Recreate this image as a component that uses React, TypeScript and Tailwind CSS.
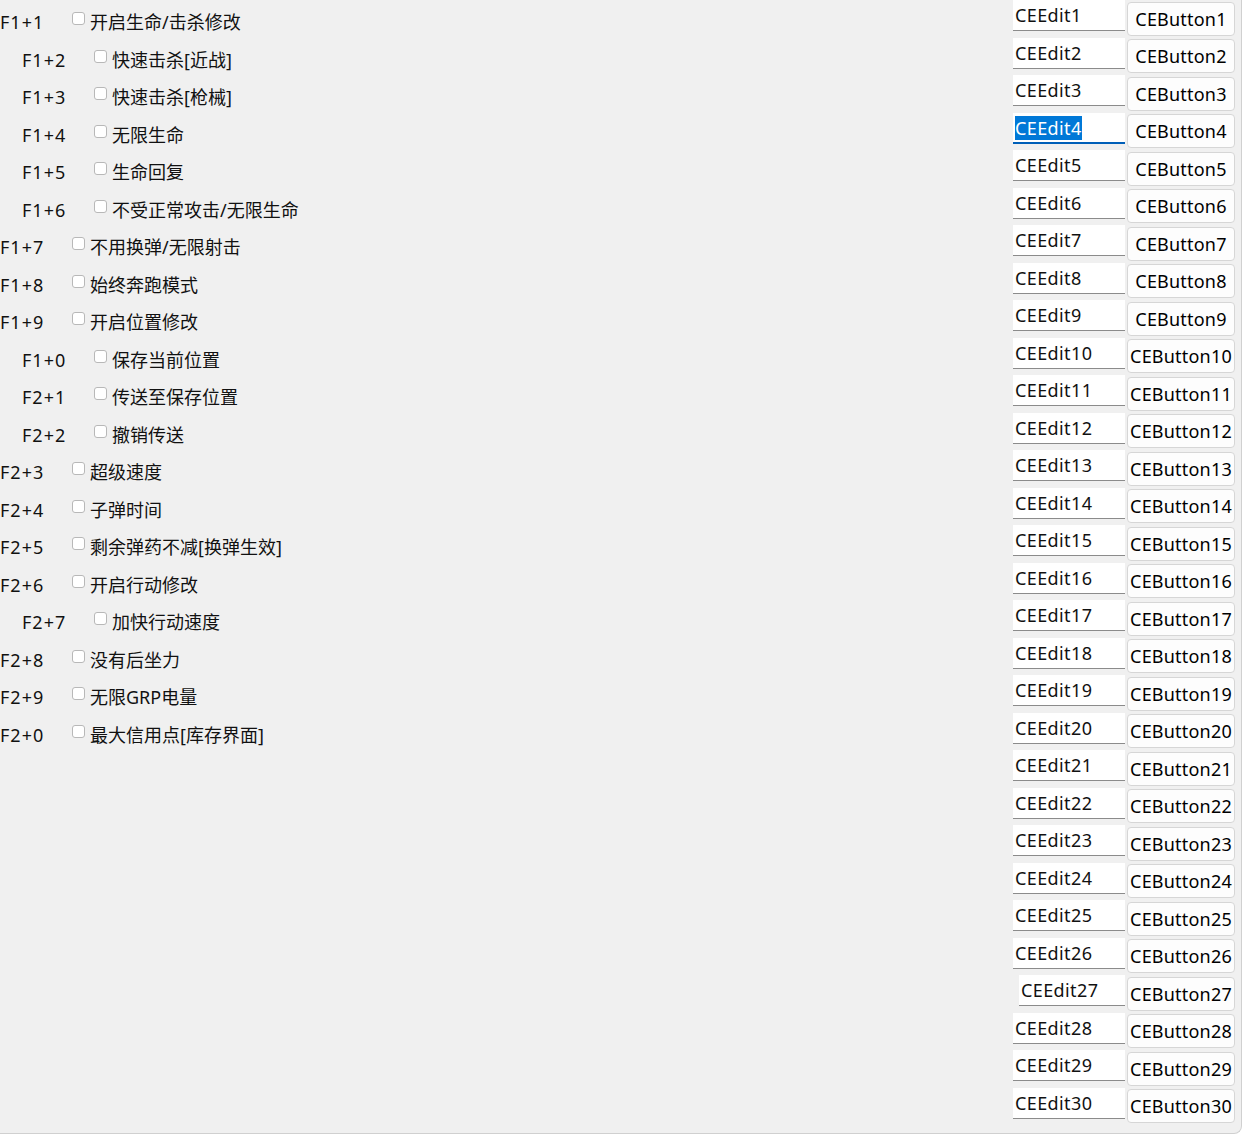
const cheats: { key: string; label: string; sub?: boolean }[] = [
  { key: 'F1+1', label: '开启生命/击杀修改' },
  { key: 'F1+2', label: '快速击杀[近战]', sub: true },
  { key: 'F1+3', label: '快速击杀[枪械]', sub: true },
  { key: 'F1+4', label: '无限生命', sub: true },
  { key: 'F1+5', label: '生命回复', sub: true },
  { key: 'F1+6', label: '不受正常攻击/无限生命', sub: true },
  { key: 'F1+7', label: '不用换弹/无限射击' },
  { key: 'F1+8', label: '始终奔跑模式' },
  { key: 'F1+9', label: '开启位置修改' },
  { key: 'F1+0', label: '保存当前位置', sub: true },
  { key: 'F2+1', label: '传送至保存位置', sub: true },
  { key: 'F2+2', label: '撤销传送', sub: true },
  { key: 'F2+3', label: '超级速度' },
  { key: 'F2+4', label: '子弹时间' },
  { key: 'F2+5', label: '剩余弹药不减[换弹生效]' },
  { key: 'F2+6', label: '开启行动修改' },
  { key: 'F2+7', label: '加快行动速度', sub: true },
  { key: 'F2+8', label: '没有后坐力' },
  { key: 'F2+9', label: '无限GRP电量' },
  { key: 'F2+0', label: '最大信用点[库存界面]' },
];

const font = { fontFamily: '"Noto Sans", "Noto Sans CJK SC", sans-serif' };

function CheatRow({ item }: { item: (typeof cheats)[number] }) {
  return (
    <div className={`flex items-center h-[37.5px] ${item.sub ? 'pl-[22px]' : ''}`}>
      <span className="w-[72px] shrink-0 tracking-[1px]">{item.key}</span>
      <span className="w-[13px] h-[13px] shrink-0 rounded-[3px] border border-[#b8b8b8] bg-white -mt-[8px]" />
      <span className="ml-[5px]">{item.label}</span>
    </div>
  );
}

function EditRow({ n }: { n: number }) {
  const focused = n === 4;
  const shifted = n === 27;
  return (
    <div className="flex h-[37.5px] items-start">
      <div className="w-[114px] shrink-0 flex justify-end">
        <div
          className={`h-[31px] bg-white leading-[28px] pt-[1px] pl-[2px] tracking-[0.4px] ${
            shifted ? 'w-[106px]' : 'w-[112px]'
          } ${focused ? 'border-b-2 border-[#005fb8]' : 'border-b border-[#8b8b8b]'}`}
        >
          {focused ? <span className="bg-[#0078d7] text-white">CEEdit{n}</span> : `CEEdit${n}`}
        </div>
      </div>
      <button className="ml-[2px] mt-[1.5px] w-[108px] h-[34px] rounded-[4px] border border-[#d6d6d6] bg-[#fdfdfd] text-black leading-[30px] tracking-[0.2px] text-center whitespace-nowrap">
        CEButton{n}
      </button>
    </div>
  );
}

export default function App() {
  return (
    <div className="w-[1242px] h-[1134px] bg-white overflow-hidden">
      <div
        className="w-[1242px] h-[1134px] bg-[#f0f0f0] rounded-br-[8px] border-r border-b border-[#d0d0d0] flex text-[18px] text-[#111]"
        style={font}
      >
        <div className="flex-1 pt-[4px]">
          {cheats.map((c) => (
            <CheatRow key={c.key} item={c} />
          ))}
        </div>
        <div className="w-[230px] shrink-0 pr-[6px]">
          {Array.from({ length: 30 }, (_, i) => (
            <EditRow key={i} n={i + 1} />
          ))}
        </div>
      </div>
    </div>
  );
}
